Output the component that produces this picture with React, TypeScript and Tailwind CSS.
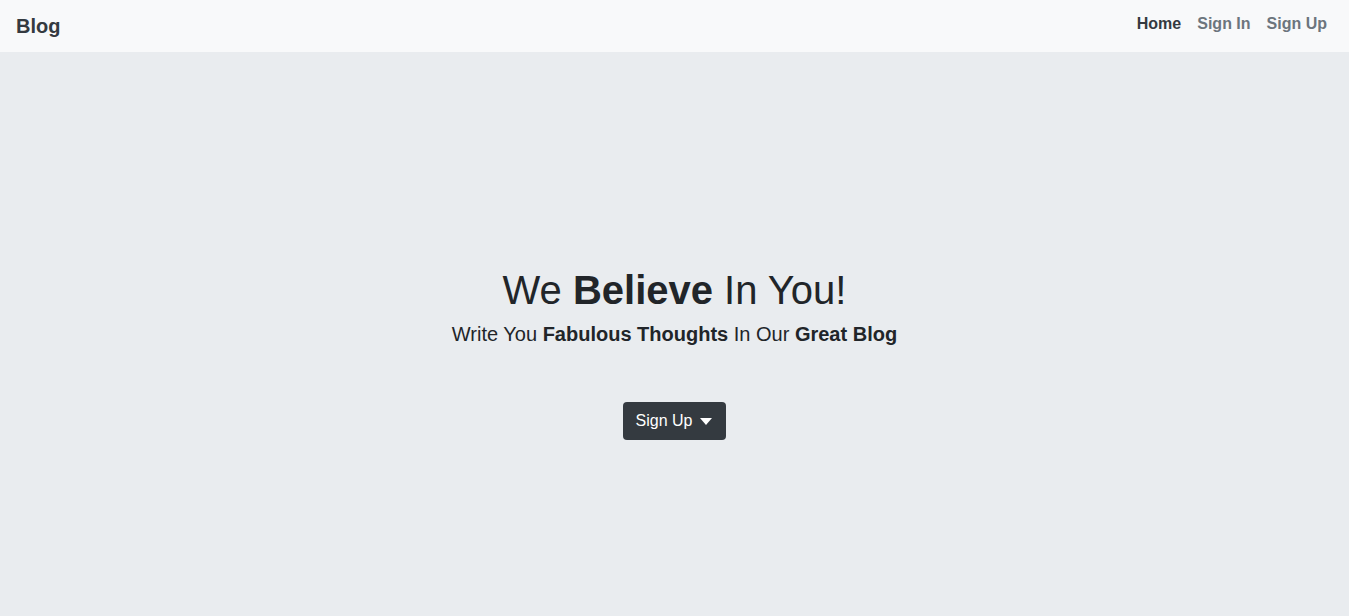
export default function App() {
  return (
    <div
      className="min-h-screen flex flex-col bg-[#e9ecef] text-[#212529]"
      style={{ fontFamily: '"Liberation Sans", Arial, sans-serif' }}
    >
      {/* Navbar */}
      <nav className="h-[52px] flex items-center justify-between pl-4 pr-[14px] bg-[#f8f9fa]">
        <a className="text-[20px] font-bold text-[#343a40] leading-[30px] -mt-[1px]">Blog</a>
        <ul className="flex items-center -mt-[4px]">
          <li className="px-2 text-base font-bold text-[#343a40]">Home</li>
          <li className="px-2 text-base font-bold text-[#6c757d]">Sign In</li>
          <li className="px-2 text-base font-bold text-[#6c757d]">Sign Up</li>
        </ul>
      </nav>

      {/* Hero */}
      <main className="flex-1 flex flex-col items-center pt-[214px]">
        <h1 className="text-[40px] leading-[48px] font-normal">
          We <b>Believe</b> In You!
        </h1>
        <p className="mt-[5px] text-[20px] leading-[30px]">
          Write You <b>Fabulous Thoughts</b> In Our <b>Great Blog</b>
        </p>
        <button className="mt-[53px] h-[38px] pl-[13px] pr-[14px] flex items-center gap-2 rounded bg-[#343a40] text-white text-base">
          Sign Up
          <svg width="12" height="8" viewBox="0 0 12 8" className="mt-[2px]">
            <path d="M0 0 H12 L6 7 Z" fill="currentColor" />
          </svg>
        </button>
      </main>
    </div>
  );
}
